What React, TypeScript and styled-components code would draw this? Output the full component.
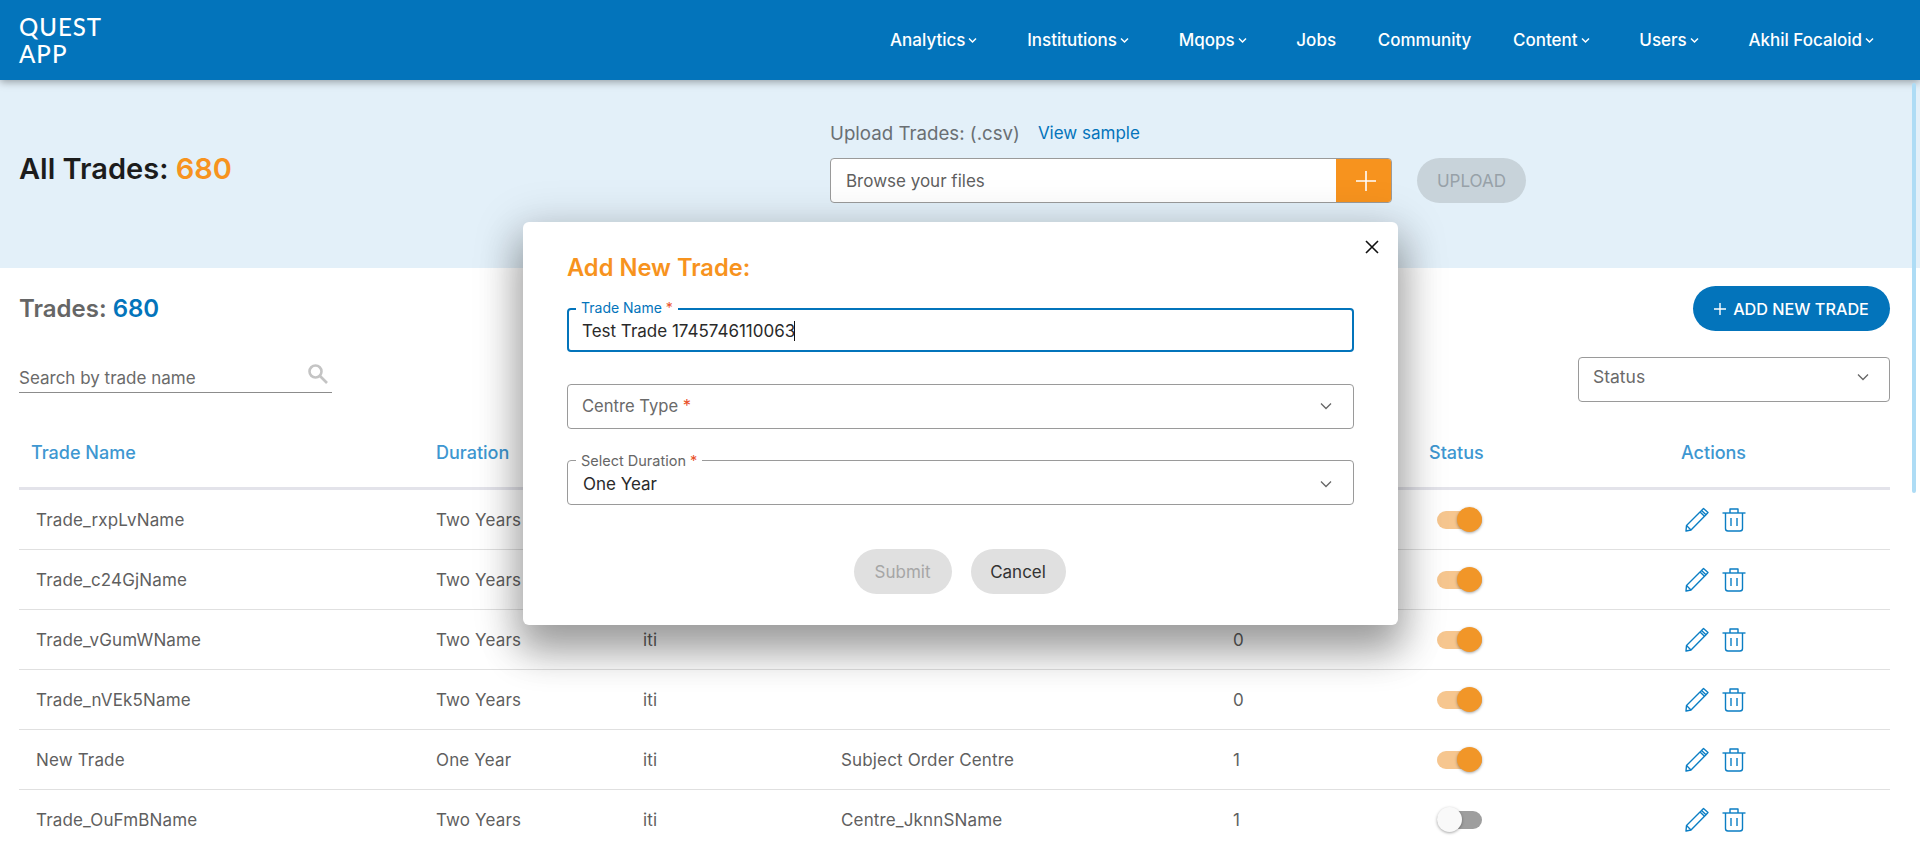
import React from "react";
import styled, { createGlobalStyle } from "styled-components";

const Global = createGlobalStyle`
  html, body { margin: 0; padding: 0; height: 847px; overflow: hidden; background: #fff; }
  body { font-family: "Inter", "Roboto", "Liberation Sans", sans-serif; color: #5f5f5f; }
  * { box-sizing: border-box; }
`;

const font = `"Inter", "Roboto", "Liberation Sans", sans-serif`;

const Page = styled.div`
  height: 847px;
  overflow: hidden;
  font-family: ${font};
  position: relative;
`;
const Header = styled.header`
  height: 80px;
  background: #0374bb;
  box-shadow: 0 2px 8px rgba(0, 0, 0, 0.35);
  display: flex;
  align-items: center;
  justify-content: space-between;
  padding: 0 38px 0 19px;
  position: relative;
  z-index: 2;
`;
const Logo = styled.div`
  color: #fff;
  font-family: "Lato", sans-serif;
  font-size: 24px;
  line-height: 27px;
  font-weight: 500;
  letter-spacing: 1px;
`;
const Nav = styled.nav`
  display: flex;
  gap: 41.7px;
  align-items: center;
`;
const NavItem = styled.a<{ $chev: boolean }>`
  color: #fff;
  font-size: 17px;
  font-weight: 500;
  display: flex;
  align-items: center;
  gap: 3px;
  margin-right: ${(p) => (p.$chev ? 8 : 0)}px;
`;
const Hero = styled.section`
  height: 188px;
  background: #e3f0f9;
  display: flex;
  padding-left: 19px;
`;
const HeroTitle = styled.h1`
  margin: 0;
  width: 811px;
  font-size: 29px;
  font-weight: 600;
  color: #1c1c1c;
  padding-top: 75px;
  line-height: 28px;
`;
const Accent = styled.span<{ $c: string }>`
  color: ${(p) => p.$c};
`;
const Upload = styled.div`
  padding-top: 41px;
`;
const UploadLabel = styled.div`
  display: flex;
  align-items: center;
  gap: 18px;
  font-size: 18.7px;
  color: #6a6f73;
  height: 24px;
`;
const SampleLink = styled.a`
  font-size: 17px;
  color: #0374bb;
`;
const UploadRow = styled.div`
  display: flex;
  margin-top: 13px;
  gap: 25px;
`;
const FileBox = styled.div`
  width: 562px;
  height: 45px;
  display: flex;
  border: 1px solid #9a9a9a;
  border-radius: 4px;
  background: #fff;
  overflow: hidden;
`;
const FileText = styled.div`
  flex: 1;
  font-size: 17px;
  line-height: 45px;
  padding-left: 15px;
  color: #5f5f5f;
`;
const FilePlus = styled.div`
  width: 56px;
  background: #f7931e;
  margin: -1px;
  padding-left: 4px;
  display: flex;
  align-items: center;
  justify-content: center;
`;
const UploadBtn = styled.button`
  width: 109px;
  height: 45px;
  border: none;
  border-radius: 23px;
  background: #c8d3da;
  color: #97a1a8;
  font-family: inherit;
  font-size: 17px;
  font-weight: 400;
`;
const Body = styled.main`
  padding: 18px 30px 0 19px;
`;
const TitleRow = styled.div`
  display: flex;
  justify-content: space-between;
  align-items: center;
  height: 45px;
`;
const SubTitle = styled.h2`
  margin: 0;
  font-size: 24px;
  font-weight: 600;
  color: #666;
`;
const AddBtn = styled.button`
  width: 197px;
  height: 45px;
  border: none;
  border-radius: 23px;
  background: #0374bb;
  color: #fff;
  font-family: inherit;
  font-size: 16.2px;
  font-weight: 500;
  display: flex;
  align-items: center;
  justify-content: center;
  gap: 7px;
`;
const FilterRow = styled.div`
  display: flex;
  justify-content: space-between;
  align-items: flex-start;
  margin-top: 26px;
`;
const Search = styled.div`
  width: 313px;
  height: 36px;
  border-bottom: 1px solid #8c8c8c;
  display: flex;
  align-items: center;
  justify-content: space-between;
  font-size: 17px;
  color: #6a6a6a;
  padding: 6px 4px 0 0;
`;
const SearchIcon = styled.svg`
  margin-top: -8px;
`;
const StatusSelect = styled.div`
  width: 312px;
  height: 45px;
  border: 1px solid #9a9a9a;
  border-radius: 4px;
  display: flex;
  align-items: center;
  justify-content: space-between;
  padding: 0 19px 6px 14px;
  font-size: 17.5px;
  color: #6a6a6a;
`;
const grid = `
  display: grid;
  grid-template-columns: 417px 207px 198px 392px 197px 251px 1fr;
`;
const TableHead = styled.div`
  ${grid}
  height: 88px;
  padding-top: 15px;
  border-bottom: 3px solid #e3e3ea;
  align-items: center;
  color: #3e97d1;
  font-size: 18px;
  font-weight: 500;
`;
const HeadCell = styled.div<{ $pad: number }>`
  margin-left: ${(p) => p.$pad}px;
`;
const Row = styled.div`
  ${grid}
  height: 60px;
  border-bottom: 1px solid #e0e0e0;
  align-items: center;
  font-size: 17px;
  letter-spacing: 0.15px;
  color: #5f5f5f;
`;
const Cell = styled.div<{ $pad: number }>`
  padding-left: ${(p) => p.$pad}px;
  white-space: nowrap;
`;
const Toggle = styled.div<{ $on: boolean }>`
  width: 45px;
  height: 18px;
  margin-left: 7px;
  border-radius: 9px;
  background: ${(p) => (p.$on ? "#f6c68f" : "#9e9e9e")};
  position: relative;
  &::after {
    content: "";
    position: absolute;
    top: -4px;
    ${(p) => (p.$on ? "right: 0;" : "left: 0;")}
    width: 25px;
    height: 25px;
    border-radius: 50%;
    background: ${(p) => (p.$on ? "#f19628" : "#f9f9f9")};
    box-shadow: 0 1px 3px rgba(0, 0, 0, 0.35);
  }
`;
const Actions = styled.div`
  display: flex;
  gap: 13px;
  align-items: center;
  padding: 0 0 0 4px;
`;
const Thumb = styled.div`
  position: absolute;
  right: 4px;
  top: 83px;
  width: 4px;
  height: 410px;
  border-radius: 2px;
  background: #aedcf5;
  z-index: 3;
`;
const Modal = styled.div`
  position: absolute;
  left: 523px;
  top: 222px;
  width: 875px;
  height: 403px;
  background: #fff;
  border-radius: 6px;
  padding: 33px 44px 0 44px;
  z-index: 5;
  box-shadow: 0 24px 38px 3px rgba(0, 0, 0, 0.3), 0 9px 46px 8px rgba(0, 0, 0, 0.15);
`;
const Close = styled.button`
  position: absolute;
  right: 18px;
  top: 17px;
  width: 16px;
  height: 16px;
  padding: 0;
  border: none;
  background: none;
`;
const ModalTitle = styled.h3`
  margin: 0 0 27px;
  height: 26px;
  line-height: 26px;
  font-size: 23.7px;
  font-weight: 600;
  color: #f7931e;
`;
const Field = styled.div<{ $focus?: boolean; $gap?: number; $filled?: boolean }>`
  position: relative;
  height: ${(p) => (p.$focus ? 44 : 45)}px;
  border: ${(p) => (p.$focus ? "2px solid #0374bb" : "1px solid #9a9a9a")};
  border-radius: 4px;
  margin-top: ${(p) => p.$gap ?? 0}px;
  display: flex;
  align-items: center;
  justify-content: space-between;
  padding: ${(p) => (p.$filled ? 3 : p.$focus ? 2 : 0)}px ${(p) => (p.$focus ? 13 : 20)}px
    ${(p) => (p.$filled || p.$focus ? 0 : 2)}px ${(p) => (p.$focus ? 13 : p.$filled ? 15 : 14)}px;
  font-size: 17px;
  color: #2a2a2a;
`;
const Legend = styled.span<{ $blue?: boolean }>`
  position: absolute;
  left: ${(p) => (p.$blue ? 7 : 8)}px;
  top: ${(p) => (p.$blue ? -10 : -8)}px;
  padding: 0 5px;
  background: #fff;
  font-size: ${(p) => (p.$blue ? 14 : 14.5)}px;
  line-height: 15px;
  color: ${(p) => (p.$blue ? "#0374bb" : "#666")};
`;
const Star = styled.span`
  color: #e9512b;
`;
const Placeholder = styled.span`
  color: #6a6a6a;
  font-size: 16.6px;
`;
const Caret = styled.span`
  display: inline-block;
  width: 1px;
  height: 20px;
  background: #111;
  vertical-align: -4px;
  margin-left: -1px;
`;
const ModalBtns = styled.div`
  display: flex;
  justify-content: center;
  gap: 19px;
  margin-top: 44px;
  padding-right: 2px;
`;
const GreyBtn = styled.button<{ $off?: boolean; $w: number }>`
  width: ${(p) => p.$w}px;
  height: 45px;
  border: none;
  border-radius: 23px;
  background: #e0e0e0;
  color: ${(p) => (p.$off ? "#a6a6a6" : "#333")};
  font-family: inherit;
  font-size: 17px;
`;

const Chev = ({ s = 14, c = "#666", w = 1.3 }: { s?: number; c?: string; w?: number }) => (
  <svg width={s} height={s} viewBox="0 0 14 14" fill="none">
    <path d="M2 4.5 L7 9.5 L12 4.5" stroke={c} strokeWidth={w} />
  </svg>
);
const NavChev = () => (
  <svg width="9" height="9" viewBox="0 0 9 9" fill="none">
    <path d="M1 2.5 L4.5 6 L8 2.5" stroke="#fff" strokeWidth="1.5" />
  </svg>
);
const Pencil = () => (
  <svg width="24" height="25" viewBox="0 0 24 25" fill="none" stroke="#0b7ec4" strokeWidth="1.4" strokeLinejoin="round">
    <path d="M1.5 18.5 L16.5 3.5 L18.5 1.5 L23 5.5 L21 7.8 L6 23 L1 24 Z" />
    <path d="M15 5 L19.5 9.2 M1.5 18.5 L6 23" />
    <path d="M16.5 3.5 L21 7.8" />
  </svg>
);
const Trash = () => (
  <svg width="24" height="25" viewBox="0 0 24 25" fill="none" stroke="#0b7ec4" strokeWidth="1.4" strokeLinejoin="round">
    <path d="M0.5 6 H23.5" />
    <path d="M8 6 V2 H16 V6" />
    <path d="M3.5 6 V21.5 Q3.5 24 6 24 H18 Q20.5 24 20.5 21.5 V6" />
    <path d="M9 11 V19 M15 11 V19" />
  </svg>
);
const NavLink = ({ t, chev = true }: { t: string; chev?: boolean }) => (
  <NavItem $chev={chev}>
    {t}
    {chev && <NavChev />}
  </NavItem>
);

const rows = [
  ["Trade_rxpLvName", "Two Years", "iti", "", "0", true],
  ["Trade_c24GjName", "Two Years", "iti", "", "0", true],
  ["Trade_vGumWName", "Two Years", "iti", "", "0", true],
  ["Trade_nVEk5Name", "Two Years", "iti", "", "0", true],
  ["New Trade", "One Year", "iti", "Subject Order Centre", "1", true],
  ["Trade_OuFmBName", "Two Years", "iti", "Centre_JknnSName", "1", false],
] as const;

export default function App() {
  return (
    <Page>
      <Global />
      <Header>
        <Logo>
          QUEST
          <br />
          APP
        </Logo>
        <Nav>
          <NavLink t="Analytics" />
          <NavLink t="Institutions" />
          <NavLink t="Mqops" />
          <NavLink t="Jobs" chev={false} />
          <NavLink t="Community" chev={false} />
          <NavLink t="Content" />
          <NavLink t="Users" />
          <NavLink t="Akhil Focaloid" />
        </Nav>
      </Header>
      <Thumb />
      <Hero>
        <HeroTitle>
          All Trades: <Accent $c="#f7931e">680</Accent>
        </HeroTitle>
        <Upload>
          <UploadLabel>
            Upload Trades: (.csv) <SampleLink>View sample</SampleLink>
          </UploadLabel>
          <UploadRow>
            <FileBox>
              <FileText>Browse your files</FileText>
              <FilePlus>
                <svg width="20" height="20" viewBox="0 0 20 20" stroke="#fff" strokeWidth="1.6">
                  <path d="M10 0 V20 M0 10 H20" />
                </svg>
              </FilePlus>
            </FileBox>
            <UploadBtn>UPLOAD</UploadBtn>
          </UploadRow>
        </Upload>
      </Hero>
      <Body>
        <TitleRow>
          <SubTitle>
            Trades: <Accent $c="#0374bb">680</Accent>
          </SubTitle>
          <AddBtn>
            <svg width="12" height="12" viewBox="0 0 12 12" stroke="#fff" strokeWidth="1.4">
              <path d="M6 0 V12 M0 6 H12" />
            </svg>
            ADD NEW TRADE
          </AddBtn>
        </TitleRow>
        <FilterRow>
          <Search>
            Search by trade name
            <SearchIcon width="20" height="20" viewBox="0 0 20 20" fill="none" stroke="#c4c4c4" strokeWidth="2.6">
              <circle cx="7.5" cy="7.5" r="6" />
              <path d="M12 12 L19 19" />
            </SearchIcon>
          </Search>
          <StatusSelect>
            Status
            <Chev />
          </StatusSelect>
        </FilterRow>
        <TableHead>
          <HeadCell $pad={12}>Trade Name</HeadCell>
          <HeadCell $pad={0}>Duration</HeadCell>
          <HeadCell $pad={0}></HeadCell>
          <HeadCell $pad={0}></HeadCell>
          <HeadCell $pad={0}></HeadCell>
          <HeadCell $pad={-1}>Status</HeadCell>
          <HeadCell $pad={0}>Actions</HeadCell>
        </TableHead>
        {rows.map((r) => (
          <Row key={r[0]}>
            <Cell $pad={17}>{r[0]}</Cell>
            <Cell $pad={0}>{r[1]}</Cell>
            <Cell $pad={0}>{r[2]}</Cell>
            <Cell $pad={0}>{r[3]}</Cell>
            <Cell $pad={0}>{r[4]}</Cell>
            <Toggle $on={r[5]} />
            <Actions>
              <Pencil />
              <Trash />
            </Actions>
          </Row>
        ))}
      </Body>
      <Modal>
        <Close aria-label="close">
          <svg width="16" height="16" viewBox="0 0 16 16" stroke="#111" strokeWidth="1.6">
            <path d="M2 2 L14 14 M14 2 L2 14" />
          </svg>
        </Close>
        <ModalTitle>Add New Trade:</ModalTitle>
        <Field $focus>
          <Legend $blue>
            Trade Name <Star>*</Star>
          </Legend>
          <span>
            Test Trade 1745746110063
            <Caret />
          </span>
        </Field>
        <Field $gap={32}>
          <Placeholder>
            Centre Type <Star>*</Star>
          </Placeholder>
          <Chev />
        </Field>
        <Field $gap={31} $filled>
          <Legend>
            Select Duration <Star>*</Star>
          </Legend>
          <span>One Year</span>
          <Chev />
        </Field>
        <ModalBtns>
          <GreyBtn $off $w={98}>
            Submit
          </GreyBtn>
          <GreyBtn $w={95}>Cancel</GreyBtn>
        </ModalBtns>
      </Modal>
    </Page>
  );
}
